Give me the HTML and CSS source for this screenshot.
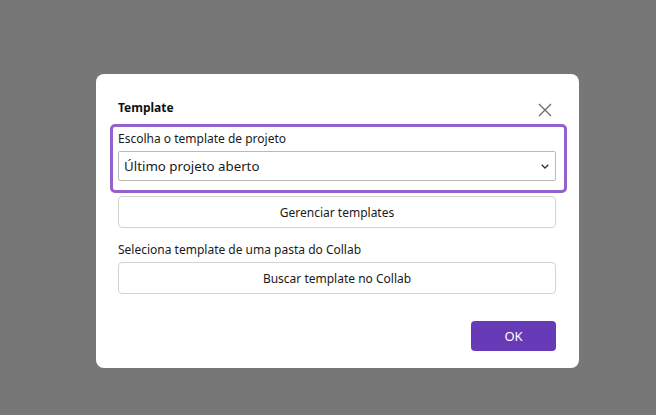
FILE: index.html
```html
<!DOCTYPE html>
<html lang="pt-BR">
<head>
<meta charset="utf-8">
<title>Template</title>
<link rel="stylesheet" href="styles.css">
</head>
<body>
<div class="overlay">
  <div class="dialog">
    <div class="dialog-header">
      <h2 class="dialog-title">Template</h2>
      <button class="close-btn" aria-label="Fechar">
        <svg width="14" height="14" viewBox="0 0 14 14"><path d="M1 1 L13 13 M13 1 L1 13" stroke="#6b6b6b" stroke-width="1.3" fill="none"/></svg>
      </button>
    </div>
    <div class="field focused">
      <label class="field-label">Escolha o template de projeto</label>
      <div class="select">
        <span class="select-value">Último projeto aberto</span>
        <svg class="chevron" width="8" height="5" viewBox="0 0 8 5"><path d="M0.7 0.7 L4 4 L7.3 0.7" stroke="#333" stroke-width="1.3" fill="none"/></svg>
      </div>
    </div>
    <button class="btn btn-secondary manage">Gerenciar templates</button>
    <div class="field collab">
      <label class="field-label">Seleciona template de uma pasta do Collab</label>
      <button class="btn btn-secondary">Buscar template no Collab</button>
    </div>
    <div class="dialog-footer">
      <button class="btn btn-primary">OK</button>
    </div>
  </div>
</div>
</body>
</html>
```
FILE: styles.css
```css
html, body {
  margin: 0;
  padding: 0;
  height: 100%;
}
body {
  background: #777777;
  font-family: "Noto Sans", "Open Sans", sans-serif;
  color: #1a1a1a;
}
.overlay {
  padding: 74px 0 0 96px;
}
.dialog {
  width: 483px;
  height: 294px;
  box-sizing: border-box;
  background: #ffffff;
  border-radius: 8px;
  padding: 22px 0 0 22px;
  display: flex;
  flex-direction: column;
}
.dialog-header {
  display: flex;
  justify-content: space-between;
  align-items: center;
  width: 438px;
  height: 22px;
}
.dialog-title {
  margin: 0;
  font-size: 12px;
  font-weight: 700;
  color: #111;
}
.close-btn {
  border: none;
  background: none;
  padding: 0 4px 0 0;
  margin-top: 6px;
  display: flex;
}
.field {
  display: flex;
  flex-direction: column;
  width: 438px;
}
.field.focused {
  margin: 6px 0 0 -8px;
  width: 457px;
  box-sizing: border-box;
  border: 3px solid #9362cf;
  border-radius: 5px;
  padding: 3px 8px 9px 5px;
}
.field-label {
  font-size: 12px;
  line-height: 17px;
  color: #1a1a1a;
  margin-bottom: 4px;
}
.select {
  height: 30px;
  box-sizing: border-box;
  border: 1px solid #b9b9b9;
  border-radius: 2px;
  display: flex;
  align-items: center;
  justify-content: space-between;
  padding: 0 6px 0 5px;
}
.select-value {
  font-size: 13.3px;
  color: #1a1a1a;
}
.btn {
  font-family: inherit;
  font-size: 12px;
  color: #1a1a1a;
  cursor: pointer;
}
.btn-secondary {
  width: 438px;
  height: 32px;
  background: #ffffff;
  border: 1px solid #d3d3d3;
  border-radius: 4px;
}
.manage {
  margin-top: 3px;
}
.collab {
  margin-top: 13px;
}
.dialog-footer {
  display: flex;
  justify-content: flex-end;
  width: 438px;
  margin-top: 27px;
}
.btn-primary {
  width: 85px;
  height: 30px;
  background: #673ab7;
  color: #ffffff;
  border: none;
  border-radius: 4px;
  font-size: 13px;
}
```
